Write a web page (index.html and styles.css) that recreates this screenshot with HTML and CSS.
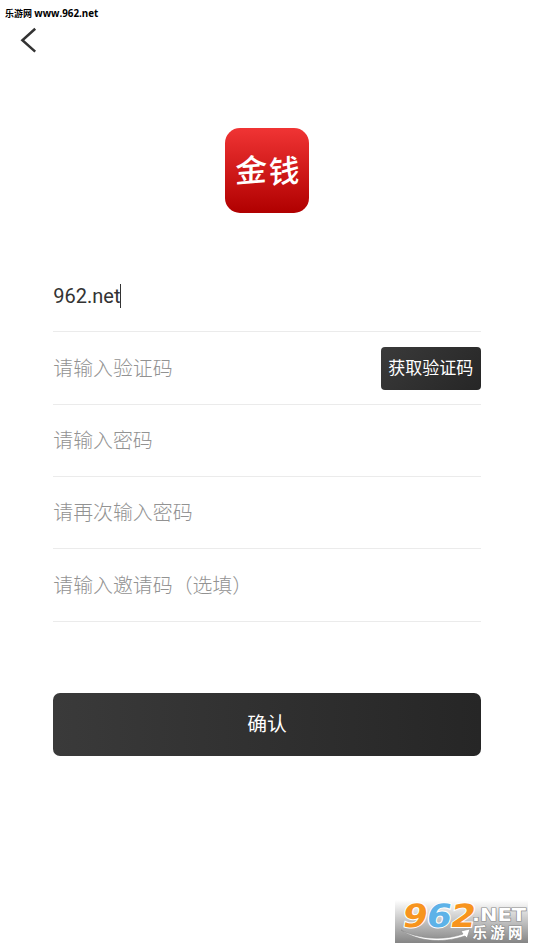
FILE: index.html
```html
<!doctype html>
<html lang="zh-CN">
<head>
    <meta charset="utf-8">
    <meta name="viewport" content="width=device-width, initial-scale=1">
    <title>金钱</title>
    <link rel="stylesheet" href="styles.css">
</head>
<body>
    <header class="header">
        <div class="site-name">乐游网 <span>www.962.net</span></div>
        <a class="back" href="#" aria-label="返回">
            <svg width="18" height="26" viewBox="0 0 18 26">
                <path d="M15.2 1.8 2.4 13.3l12.8 11.3" fill="none" stroke="#333" stroke-width="2.5"/>
            </svg>
        </a>
    </header>

    <main class="container">
        <div class="logo">
            <svg width="84" height="86" viewBox="0 0 84 86">
                <g class="logo-text">
                    <text transform="translate(10 55) rotate(-5) skewX(-6)" textLength="32" lengthAdjust="spacingAndGlyphs">金</text>
                    <text transform="translate(43.5 56) rotate(-5) skewX(-6)" textLength="31" lengthAdjust="spacingAndGlyphs">钱</text>
                </g>
            </svg>
        </div>

        <form class="form">
            <div class="field">
                <span class="value">962.net</span><i class="caret"></i>
            </div>
            <div class="field">
                <input type="text" placeholder="请输入验证码">
                <button type="button" class="code-btn">获取验证码</button>
            </div>
            <div class="field">
                <input type="password" placeholder="请输入密码">
            </div>
            <div class="field">
                <input type="password" placeholder="请再次输入密码">
            </div>
            <div class="field">
                <input type="text" placeholder="请输入邀请码（选填）">
            </div>
            <button type="button" class="submit-btn">确认</button>
        </form>
    </main>

    <div class="watermark">
        <svg width="133" height="43" viewBox="0 0 133 43">
            <path d="M6 30c17 9 42 11 62 4l-2-3 9-2-3 9-2-2C46 44 22 41 6 30z" fill="#fff" stroke="#888" stroke-width=".6"/>
            <g class="mark-number">
                <text transform="translate(6 26.5) skewX(-10)" textLength="25" lengthAdjust="spacingAndGlyphs" fill="#f7941e">9</text>
                <text transform="translate(30 26.5) skewX(-10)" textLength="25" lengthAdjust="spacingAndGlyphs" fill="#5db2e8">6</text>
                <text transform="translate(54 26.5) skewX(-10)" textLength="25" lengthAdjust="spacingAndGlyphs" fill="#f7941e">2</text>
            </g>
            <text class="mark-net" x="77" y="20.5" textLength="54" lengthAdjust="spacingAndGlyphs">.NET</text>
            <text class="mark-name" x="77.5" y="38" textLength="50">乐游网</text>
        </svg>
    </div>
</body>
</html>
```

FILE: styles.css
```css
* {
    box-sizing: border-box;
}
body {
    margin: 0;
    height: 949px;
    overflow: hidden;
    background: #fff;
    color: #333;
    font-family: Roboto, "Noto Sans CJK SC", sans-serif;
}
.header {
    height: 128px;
    padding: 5px 0 0 5px;
}
.site-name {
    height: 22px;
    line-height: 17px;
    font-size: 9px;
    font-weight: bold;
    color: #000;
    white-space: nowrap;
}
.site-name span {
    font-family: "Open Sans", sans-serif;
    font-size: 9.8px;
}
.back {
    display: block;
    width: 18px;
    height: 26px;
    margin-left: 15px;
}
.back svg {
    display: block;
}
.container {
    width: 427.5px;
    margin-left: 53.3px;
}
.logo {
    width: 84px;
    height: 85px;
    margin: 0 auto;
    border-radius: 15px;
    background: linear-gradient(#f03434, #b00000);
}
.logo svg {
    display: block;
}
.logo-text {
    font-family: "Noto Sans CJK SC", serif;
    font-size: 31px;
    font-weight: 500;
    fill: #fff;
}

/* Form */
.form {
    margin-top: 47px;
}
.field {
    display: flex;
    align-items: center;
    height: 72.35px;
    border-bottom: 1px solid #ebebeb;
}
.value {
    font-size: 20px;
}
.caret {
    width: 1px;
    height: 24px;
    background: #333;
}
input {
    flex: 1;
    min-width: 0;
    height: 40px;
    padding: 0 0 1.5px;
    border: none;
    outline: none;
    background: none;
    font-family: "Noto Sans CJK SC", sans-serif;
    font-size: 19.9px;
    font-weight: 300;
    color: #333;
}
input::placeholder {
    color: #929292;
}
button {
    padding: 0 0 3px;
    border: none;
    color: #fff;
    font-family: "Noto Sans CJK SC", sans-serif;
    background: linear-gradient(90deg, #3a3a3a, #262626);
}
.code-btn {
    width: 100px;
    height: 43px;
    margin-top: 1px;
    padding-bottom: 4px;
    border-radius: 4px;
    font-size: 17px;
    background: linear-gradient(135deg, #3a3a3a, #262626);
}
.submit-btn {
    display: block;
    width: 100%;
    height: 63px;
    margin-top: 71.2px;
    border-radius: 7px;
    font-size: 19.8px;
}

/* Corner mark */
.watermark {
    position: absolute;
    left: 395px;
    top: 900px;
    width: 133px;
    height: 43px;
    background: linear-gradient(#fff, #858585);
}
.watermark svg {
    display: block;
    overflow: visible;
}
.mark-number {
    font-family: "DejaVu Sans", sans-serif;
    font-size: 32px;
    font-weight: bold;
    stroke: #fff;
    stroke-width: 2px;
    paint-order: stroke;
}
.mark-net,
.mark-name {
    font-family: "Noto Sans CJK SC", sans-serif;
    font-size: 14.5px;
    font-weight: bold;
    fill: #fff;
    stroke: #888;
    stroke-width: 1.2px;
    paint-order: stroke;
}
.mark-net {
    font-family: "DejaVu Sans", sans-serif;
    font-size: 17px;
}
```
